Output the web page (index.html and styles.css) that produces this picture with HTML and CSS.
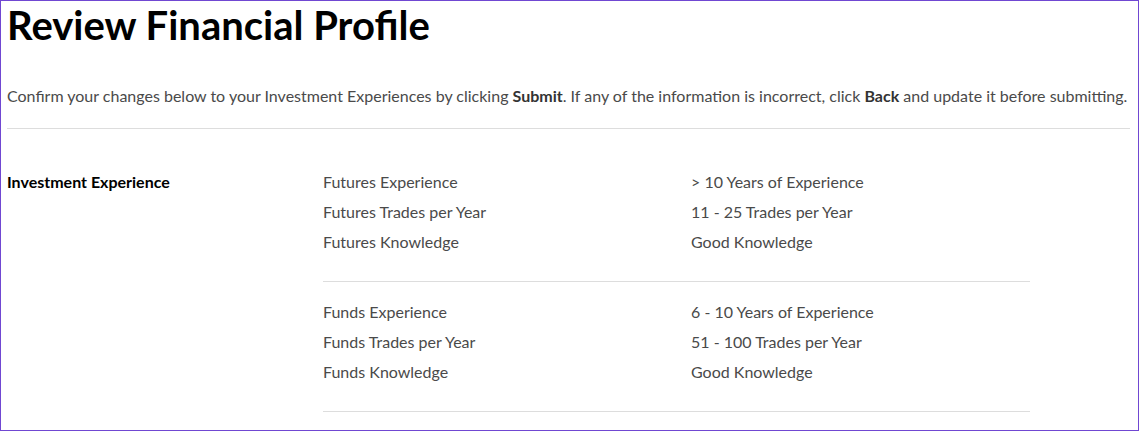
FILE: index.html
```html
<!DOCTYPE html>
<html lang="en">
<head>
<meta charset="utf-8">
<title>Review Financial Profile</title>
<link rel="stylesheet" href="styles.css">
</head>
<body>
<h1 class="title">Review Financial Profile</h1>
<p class="intro">Confirm your changes below to your Investment Experiences by clicking <b>Submit</b>. If any of the information is incorrect, click <b>Back</b> and update it before submitting.</p>
<div class="rule"></div>
<section class="profile">
  <div class="label">Investment Experience</div>
  <div class="groups">
    <div class="group">
      <div class="row"><span class="key">Futures Experience</span><span class="val">&gt; 10 Years of Experience</span></div>
      <div class="row"><span class="key">Futures Trades per Year</span><span class="val">11 - 25 Trades per Year</span></div>
      <div class="row"><span class="key">Futures Knowledge</span><span class="val">Good Knowledge</span></div>
    </div>
    <div class="group">
      <div class="row"><span class="key">Funds Experience</span><span class="val">6 - 10 Years of Experience</span></div>
      <div class="row"><span class="key">Funds Trades per Year</span><span class="val">51 - 100 Trades per Year</span></div>
      <div class="row"><span class="key">Funds Knowledge</span><span class="val">Good Knowledge</span></div>
    </div>
  </div>
</section>
</body>
</html>
```
FILE: styles.css
```css
* { box-sizing: border-box; }
html {
  height: 100%;
  border: 1px solid #7047d2;
  overflow: hidden;
  background: #fff;
}
body {
  margin: 0;
  padding: 0 6px;
  font-family: "Lato", "Liberation Sans", sans-serif;
  color: #4a4a4a;
}
.title {
  margin: 0;
  padding-top: 2px;
  font-size: 40px;
  line-height: 44px;
  font-weight: 700;
  color: #000;
}
.intro {
  margin: 39px 0 0;
  font-size: 16px;
  line-height: 20px;
}
.intro b { color: #333; font-weight: 700; }
.rule {
  margin-top: 22px;
  margin-right: 2px;
  border-top: 1px solid #ddd;
}
.profile {
  display: grid;
  grid-template-columns: 316px 707px;
  padding-top: 43px;
}
.label {
  font-size: 16px;
  font-weight: 700;
  color: #000;
  line-height: 20px;
}
.group {
  border-bottom: 1px solid #ddd;
  padding-bottom: 19px;
  margin-bottom: 20px;
}
.group:last-child { margin-bottom: 0; }
.row {
  display: grid;
  grid-template-columns: 368px 1fr;
  height: 30px;
  font-size: 16px;
  line-height: 20px;
}
```
